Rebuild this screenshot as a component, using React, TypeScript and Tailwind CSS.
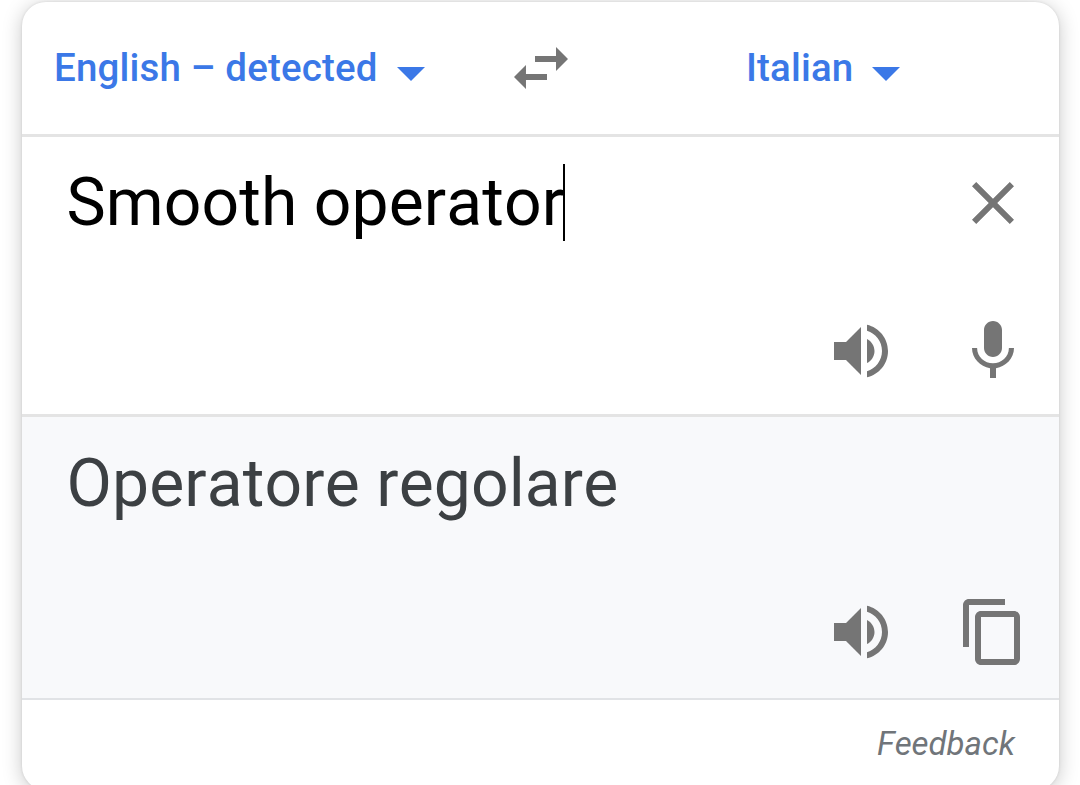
import type { ReactNode } from "react";

function Icon({ children }: { children: ReactNode }) {
  return (
    <svg viewBox="0 0 24 24" className="size-[72px] shrink-0 fill-[#757575]">
      {children}
    </svg>
  );
}

function SpeakerIcon() {
  return (
    <Icon>
      <path d="M3 9v6h4l5 5V4L7 9H3zm13.5 3c0-1.77-1.02-3.29-2.5-4.03v8.05c1.48-.73 2.5-2.25 2.5-4.02zM14 3.23v2.06c2.89.86 5 3.54 5 6.71s-2.11 5.85-5 6.71v2.06c4.01-.91 7-4.49 7-8.77s-2.99-7.86-7-8.77z" />
    </Icon>
  );
}

function LanguageButton({ label }: { label: string }) {
  return (
    <button className="flex items-center gap-[19px] text-[#3b78e7]">
      <span className="text-[38.5px] leading-[48px] font-medium tracking-[0.16px] whitespace-nowrap">
        {label}
      </span>
      <svg viewBox="0 0 28 14" className="mt-3 h-[14px] w-[28px] fill-current">
        <path d="M0 0h28L14 14z" />
      </svg>
    </button>
  );
}

export default function App() {
  return (
    <div className="h-[785px] w-[1080px] overflow-hidden bg-white px-[22px] pt-[2px] pr-[21px] font-[Roboto,sans-serif] [font-kerning:none]">
      <div className="h-[788px] overflow-hidden rounded-[24px] bg-white shadow-[0_0_3px_rgba(0,0,0,0.1),0_3px_20px_rgba(0,0,0,0.22)]">
        <div className="flex h-[135px] items-center border-b-[3px] border-[#e4e4e4]">
          <div className="w-[482.5px] pl-[32px]">
            <LanguageButton label="English – detected" />
          </div>
          <button>
            <Icon>
              <path d="M6.99 11L3 15l3.99 4v-3H14v-2H6.99v-3zM21 9l-3.99-4v3H10v2h7.01v3L21 9z" />
            </Icon>
          </button>
          <div className="pl-[169.5px]">
            <LanguageButton label="Italian" />
          </div>
        </div>

        <div className="flex h-[280px] flex-col justify-between border-b-[3px] border-[#e4e4e4] pt-[27px] pr-[30px] pb-[27px] pl-[44.5px]">
          <div className="flex items-start justify-between">
            <div className="flex text-black">
              <span className="text-[66px] leading-[77px] tracking-[0.1px] whitespace-nowrap">
                Smooth operator
              </span>
              <span className="-ml-[1px] h-[77px] w-[2px] bg-black" />
            </div>
            <button className="mt-[2.5px]">
              <Icon>
                <path d="M19 6.41L17.59 5 12 10.59 6.41 5 5 6.41 10.59 12 5 17.59 6.41 19 12 13.41 17.59 19 19 17.59 13.41 12z" />
              </Icon>
            </button>
          </div>
          <div className="flex justify-end gap-[60px]">
            <SpeakerIcon />
            <Icon>
              <path d="M12 14c1.66 0 3-1.34 3-3V5c0-1.66-1.34-3-3-3S9 3.34 9 5v6c0 1.66 1.34 3 3 3zm5.3-3c0 3-2.54 5.1-5.3 5.1S6.7 14 6.7 11H5c0 3.41 2.72 6.23 6 6.72V21h2v-3.28c3.28-.48 6-3.3 6-6.72h-1.7z" />
            </Icon>
          </div>
        </div>

        <div className="flex h-[283px] flex-col justify-between border-b-2 border-[#e1e3e6] bg-[#f8f9fb] pt-[28px] pr-[30px] pb-[30.5px] pl-[44.5px]">
          <div className="text-[66px] leading-[77px] tracking-[0.1px] text-[#3c4043]">
            Operatore regolare
          </div>
          <div className="flex justify-end gap-[60px]">
            <SpeakerIcon />
            <Icon>
              <path d="M16 1H4c-1.1 0-2 .9-2 2v14h2V3h12V1zm3 4H8c-1.1 0-2 .9-2 2v14c0 1.1.9 2 2 2h11c1.1 0 2-.9 2-2V7c0-1.1-.9-2-2-2zm0 16H8V7h11v14z" />
            </Icon>
          </div>
        </div>

        <div className="flex justify-end pt-[24px] pr-[44px]">
          <span className="text-[33px] leading-[40px] text-[#70757a] italic">
            Feedback
          </span>
        </div>
      </div>
    </div>
  );
}
